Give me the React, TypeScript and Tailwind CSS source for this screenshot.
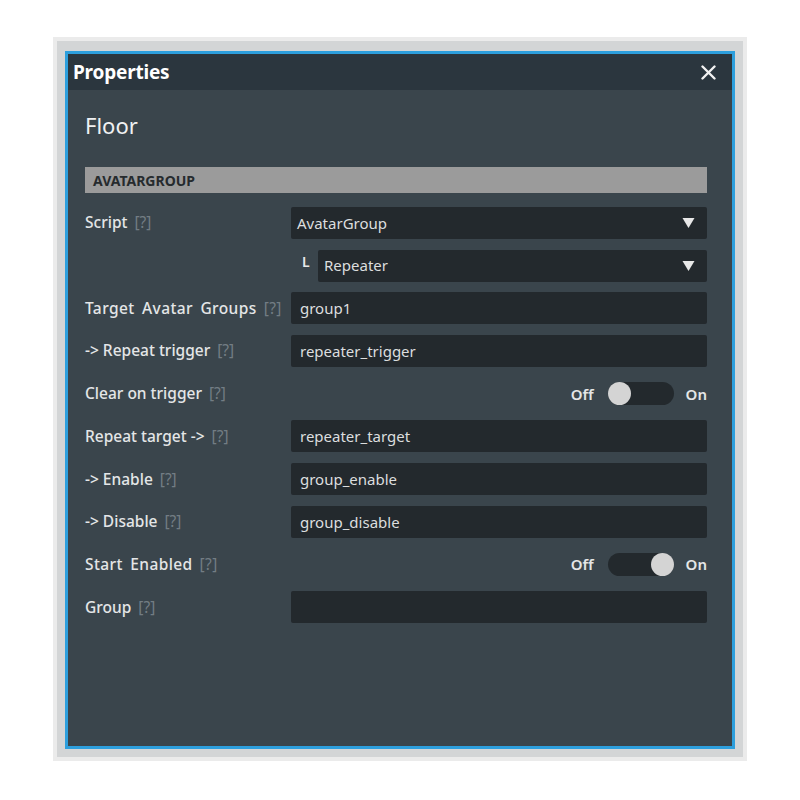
import React from 'react';

const font = { fontFamily: '"Noto Sans", "Open Sans", sans-serif' };

function Hint() {
  return <span className="ml-[7px] font-normal text-[#737d84]">[?]</span>;
}

function Label({ text, wide }: { text: string; wide?: boolean }) {
  return (
    <div className={`w-[206px] shrink-0 text-[15.5px] font-medium text-[#e4e6e7] ${wide ? 'tracking-[0.4px] [word-spacing:3px]' : ''}`}>
      {text}
      <Hint />
    </div>
  );
}

function Caret() {
  return (
    <svg width="13" height="12" viewBox="0 0 13 12" className="shrink-0">
      <path d="M0.5 1 H12.5 L6.5 11 Z" fill="#e8e8e8" />
    </svg>
  );
}

function TextField({ value }: { value: string }) {
  return (
    <div className="flex-1 h-full bg-[#23292d] rounded-[2px] flex items-center px-[9px] text-[15px] text-[#dcdedf]">
      {value}
    </div>
  );
}

function Toggle({ on }: { on: boolean }) {
  return (
    <div className="flex-1 flex items-center justify-end text-[15px] text-[#e4e6e7]">
      <span className="font-semibold">Off</span>
      <div className={`ml-[14px] w-[66px] h-[23px] rounded-full bg-[#23292d] flex items-center ${on ? 'justify-end' : 'justify-start'}`}>
        <div className="w-[23px] h-[23px] rounded-full bg-[#d4d4d4]" />
      </div>
      <span className="ml-[12px] font-semibold">On</span>
    </div>
  );
}

const rows: { label: string; kind: 'text' | 'toggle'; value?: string; on?: boolean; wide?: boolean }[] = [
  { label: 'Target Avatar Groups', kind: 'text', value: 'group1', wide: true },
  { label: '-> Repeat trigger', kind: 'text', value: 'repeater_trigger' },
  { label: 'Clear on trigger', kind: 'toggle', on: false },
  { label: 'Repeat target ->', kind: 'text', value: 'repeater_target' },
  { label: '-> Enable', kind: 'text', value: 'group_enable' },
  { label: '-> Disable', kind: 'text', value: 'group_disable' },
  { label: 'Start Enabled', kind: 'toggle', on: true, wide: true },
  { label: 'Group', kind: 'text', value: '' },
];

export default function App() {
  return (
    <div className="w-[800px] h-[800px] bg-white pt-[37px] pl-[53px]" style={font}>
      <div className="w-[694px] h-[724px] bg-[#ebebeb] p-[4px]">
        <div className="w-full h-full bg-[#d3d5d6] pt-[10px] px-[8px] pb-[6px]">
          <div className="w-[670px] h-[698px] border-[3px] border-[#2d9fdd] bg-[#3a454c] flex flex-col">
            {/* Title bar */}
            <div className="h-[36px] bg-[#2b363e] flex items-center justify-between pl-[5px] pr-[16px]">
              <span className="text-[19px] font-bold text-white tracking-[-0.2px]">Properties</span>
              <svg width="15" height="15" viewBox="0 0 15 15">
                <path d="M1.5 1.5 L13.5 13.5 M13.5 1.5 L1.5 13.5" stroke="#f2f2f2" strokeWidth="2.4" strokeLinecap="round" />
              </svg>
            </div>

            <div className="pl-[17px] pr-[25px] flex flex-col">
              <div className="h-[70px] flex items-center text-[22px] text-[#f0f1f2]">Floor</div>

              <div className="mt-[7px] h-[26px] bg-[#9b9b9b] flex items-center pl-[8px] text-[14px] font-bold text-[#262b2e]">
                AVATARGROUP
              </div>

              <div className="mt-[14px] flex flex-col gap-[10.7px]">
                <div className="h-[32px] flex items-center">
                  <Label text="Script" />
                  <div className="flex-1 h-full bg-[#23292d] rounded-[2px] flex items-center justify-between pl-[6px] pr-[12px] text-[15px] text-[#dcdedf]">
                    AvatarGroup
                    <Caret />
                  </div>
                </div>
                <div className="h-[32px] flex items-center">
                  <div className="w-[206px] shrink-0" />
                  <span className="w-[27px] pl-[11px] text-[14px] font-semibold text-[#e8e8e8] -mt-[8px]">L</span>
                  <div className="flex-1 h-full bg-[#23292d] rounded-[2px] flex items-center justify-between pl-[6px] pr-[12px] text-[15px] text-[#dcdedf]">
                    Repeater
                    <Caret />
                  </div>
                </div>
                {rows.map((r) => (
                  <div key={r.label} className="h-[32px] flex items-center">
                    <Label text={r.label} wide={r.wide} />
                    {r.kind === 'text' ? <TextField value={r.value ?? ''} /> : <Toggle on={!!r.on} />}
                  </div>
                ))}
              </div>
            </div>
          </div>
        </div>
      </div>
    </div>
  );
}
